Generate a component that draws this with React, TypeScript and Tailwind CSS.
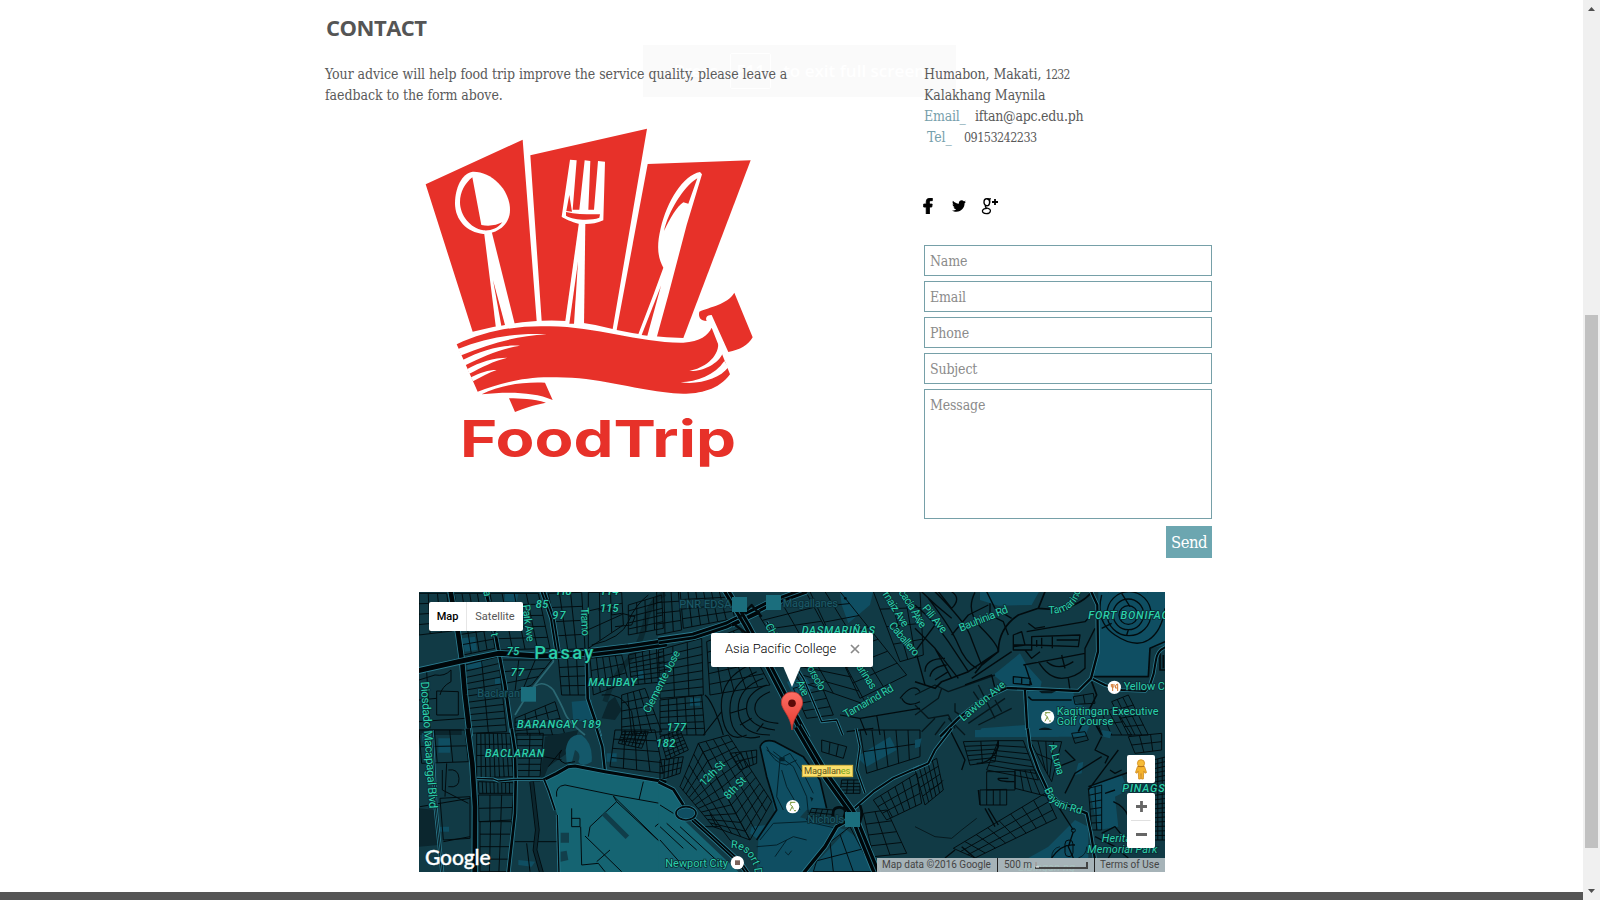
import React from "react";
import { FaFacebookF, FaTwitter } from "react-icons/fa";

const SERIF = "font-['DejaVu_Serif_Condensed','DejaVu_Serif',serif] [font-stretch:condensed]";
const RED = "#e73129";

/* ---------- Logo ---------- */
function Logo() {
  return (
    <svg width="360" height="365" viewBox="0 0 1080 1095" className="block" aria-label="FoodTrip">
      <g fill={RED}>
        <path d="M47 208 338 74 380 618Q280 625 188 650Z" />
        <path d="M361 121 711 41 608 642Q500 612 395 617Z" />
        <path d="M713 147 1022 136 820 669Q720 667 620 645Z" />
      </g>
      <g fill="#fff">
        <path d="M188 170C240 168 300 220 300 285C300 330 260 357 220 357C170 352 135 315 135 265C135 220 155 175 188 170Z" />
        <path d="M222 350 245 350 315 630 258 640Z" />
        <path d="M480 134 500 136 488 284 508 284 524 136 541 138 535 284 552 284 564 138 585 140 580 316C555 328 530 328 505 326C485 320 465 312 455 305Z" />
        <path d="M507 322 526 322 522 632 464 632Z" />
        <path d="M870 171C820 180 770 260 752 340C738 400 745 430 760 458L730 540 682 665 738 675 775 540 830 330 876 178Z" />
      </g>
      <g fill={RED}>
        <path d="M187 187 214 330C240 335 260 330 277 322C262 342 240 348 220 346C180 340 150 300 150 262C150 230 165 205 187 187Z" />
        <path d="M249 495 285 630 274 632Z" />
        <path d="M478 240 486 290 469 288Z" />
        <path d="M468 291C500 299 540 298 570 298L568 308C540 318 490 315 468 302Z" />
        <path d="M504 440 492 626 478 626Z" />
        <path d="M862 190 835 266 820 262C800 275 780 310 762 348C775 290 820 215 862 190Z" />
        <path d="M753 512 712 662 695 660Z" />
      </g>
      <g transform="translate(0 495)">
        <path fill={RED} d="M140 193C230 150 330 135 420 139C560 140 690 190 820 188C870 185 895 165 905 143L960 283C920 340 840 345 790 340C650 325 560 290 430 292C330 290 260 315 203 335Z" />
        <g fill="#fff">
          <path d="M144 207C230 172 320 158 410 163C320 168 240 190 154 226Z" />
          <path d="M158 240C215 210 280 193 330 197C280 204 215 230 166 256Z" />
          <path d="M172 267C210 246 250 233 292 233C250 243 215 262 178 281Z" />
          <path d="M183 292C210 278 235 270 260 270C235 278 215 290 189 304Z" />
          <path d="M925 190C925 235 880 265 838 273C880 275 925 250 937 222L935 205Z" />
          <path d="M943 243C915 285 860 305 812 307C870 315 930 295 955 262Z" />
        </g>
        <g fill={RED}>
          <path d="M973 38C950 75 900 80 868 95C864 112 872 122 890 123C885 113 892 104 905 105L955 216C990 210 1015 195 1028 172Z" />
          <path d="M215 343C270 315 340 305 405 308L428 360C370 335 290 335 215 343Z" />
          <path d="M297 355C330 355 370 357 408 368C370 375 340 385 315 396Z" />
        </g>
        <text x="150" y="530" fontFamily="Inter, sans-serif" fontWeight="700" fontSize="151" fill={RED} textLength="828" lengthAdjust="spacingAndGlyphs">FoodTrip</text>
      </g>
    </svg>
  );
}

/* ---------- Map drawing ---------- */
type Quad = [number, number, number, number, number, number, number, number];

/* Street grid spanned between four corners (clockwise from the first). */
function mesh([ax, ay, bx, by, cx, cy, dx, dy]: Quad, nx: number, ny: number) {
  let d = "";
  for (let i = 0; i <= nx; i++) {
    const t = i / nx;
    d += `M${ax + (bx - ax) * t} ${ay + (by - ay) * t}L${dx + (cx - dx) * t} ${dy + (cy - dy) * t}`;
  }
  for (let j = 0; j <= ny; j++) {
    const t = j / ny;
    d += `M${ax + (dx - ax) * t} ${ay + (dy - ay) * t}L${bx + (cx - bx) * t} ${by + (cy - by) * t}`;
  }
  return d;
}

function Sector({ x, y, children }: { x: number; y: number; children: React.ReactNode }) {
  return <g transform={`translate(${x} ${y}) scale(0.33333)`}>{children}</g>;
}

function Mesh({ q, nx, ny }: { q: Quad; nx: number; ny: number }) {
  return <path d={mesh(q, nx, ny)} stroke="#020b0e" strokeWidth="2.9" fill="none" />;
}

function Street({ d, w = 3 }: { d: string; w?: number }) {
  return <path d={d} stroke="#020b0e" strokeWidth={w} fill="none" strokeLinejoin="round" />;
}

function Road({ d, w = 8, twin = false }: { d: string; w?: number; twin?: boolean }) {
  return (
    <g fill="none" strokeLinejoin="round">
      <path d={d} stroke="#2b7c90" strokeWidth={w + 5} />
      <path d={d} stroke="#00070a" strokeWidth={w} />
      {twin && <path d={d} stroke="#2b7c90" strokeWidth="2.5" />}
    </g>
  );
}

interface LabelProps { x: number; y: number; t: string; len: number; s?: number; r?: number; b?: boolean; i?: boolean; c?: string }
function Label({ x, y, t, len, s = 33, r = 0, b = false, i = false, c = "#2bd0ab" }: LabelProps) {
  return (
    <text
      transform={`translate(${x} ${y}) rotate(${r})`}
      fontFamily="Roboto, sans-serif"
      fontSize={s}
      fontWeight={b ? 500 : 400}
      fontStyle={i ? "italic" : "normal"}
      textLength={len}
      fill={c}
      stroke="#0b2c35"
      strokeWidth={5}
      paintOrder="stroke"
    >
      {t}
    </text>
  );
}

/* Street name that follows a bend. */
function BentLabel({ id, d, t }: { id: string; d: string; t: string }) {
  return (
    <>
      <path id={id} d={d} fill="none" />
      <text fontFamily="Roboto, sans-serif" fontSize="32" fill="#2bd0ab" stroke="#0b2c35" strokeWidth={5} paintOrder="stroke">
        <textPath href={`#${id}`}>{t}</textPath>
      </text>
    </>
  );
}

function GolfPin({ x, y }: { x: number; y: number }) {
  return (
    <g transform={`translate(${x} ${y})`} fill="none" strokeWidth="3">
      <circle r="20" fill="#fff" />
      <path d="M-8-13H8M-3-13-8-7-1-1-8 13M-1-1 2 8" stroke="#7c9a3d" />
      <path d="M4 12H10" stroke="#7c9a3d" />
    </g>
  );
}

const PARK = "#0f4e62";
const AIR = "#156472";
const DARK = "#0b262e";
const FADED = "#1c5b69";

function MapArt() {
  return (
    <svg width="746" height="280" viewBox="0 0 746 280" className="block">
      <rect width="746" height="280" fill="#113a45" />

      {/* north west */}
      <Sector x={-4} y={-7}>
        <path fill={PARK} d="M140 160 180 155 186 195 150 200ZM155 235 205 228 200 250 158 252ZM470 350 530 345 530 405 475 410ZM270 25 310 28 305 50 268 48ZM670 255 690 255 685 280 668 280ZM240 280H262V298H240Z" />
        <path fill={DARK} d="M560 400 580 350 600 335 620 375 600 405ZM12 432H140V450H12Z" />
        <path d="M750 25Q700 50 690 120Q670 200 620 250Q590 290 570 350" stroke="#0c2b33" strokeWidth="16" fill="none" />
        <Mesh q={[12, 25, 95, 25, 112, 138, 12, 150]} nx={3} ny={4} />
        <Mesh q={[118, 25, 210, 25, 240, 190, 145, 210]} nx={4} ny={6} />
        <Mesh q={[225, 25, 370, 25, 405, 190, 255, 195]} nx={4} ny={5} />
        <Mesh q={[400, 25, 500, 22, 510, 190, 432, 195]} nx={3} ny={4} />
        <Mesh q={[520, 22, 620, 22, 625, 120, 520, 190]} nx={3} ny={3} />
        <Mesh q={[150, 240, 250, 215, 275, 440, 165, 445]} nx={2} ny={11} />
        <Mesh q={[262, 225, 410, 225, 350, 300, 275, 330]} nx={3} ny={3} />
        <Mesh q={[430, 220, 512, 215, 515, 330, 440, 330]} nx={3} ny={4} />
        <Mesh q={[525, 220, 620, 210, 640, 290, 535, 330]} nx={5} ny={3} />
        <Mesh q={[300, 400, 420, 350, 450, 450, 300, 450]} nx={4} ny={4} />
        <Mesh q={[640, 60, 740, 30, 745, 130, 640, 150]} nx={4} ny={5} />
        <Mesh q={[640, 210, 745, 185, 750, 290, 650, 300]} nx={5} ny={7} />
        <Mesh q={[620, 330, 690, 310, 740, 440, 620, 450]} nx={4} ny={5} />
        <Street d="M12 285 60 270Q90 275 108 255V290Q80 305 75 330M65 318 130 320V390H65ZM12 345 65 340M12 410 150 400M35 260 45 430M550 75 590 70V90L620 85 660 95 650 120 600 125M530 180Q620 160 640 110T700 30M560 330Q620 320 650 380L660 450" />
        <path d="M300 390 340 325 415 230V205M345 320Q378 275 415 315Q440 360 450 385T510 450" stroke="#2b6873" strokeWidth="5" fill="none" />
        <Road d="M382 15 412 100 428 200" w={14} twin />
        <Road d="M212 15 238 130 252 205 270 300 292 455" w={9} />
        <Road d="M106 15 130 150 142 235 150 330 165 455" w={14} />
        <Road d="M530 203 640 190 755 173" w={24} twin />
        <Road d="M5 258 130 230 250 205 360 212 430 212 530 203" w={15} />
        <Road d="M515 205 518 340 545 420 555 455" w={8} />
      </Sector>

      {/* south west */}
      <Sector x={-4} y={138}>
        <path fill={AIR} d="M392 150 460 112 570 127 755 158V430H432L427 255Z" />
        <path fill={DARK} d="M12 235 62 240 70 345 12 350ZM345 155 375 155 390 20 490 0 470 60 400 110 385 148Z" />
        <path fill={PARK} d="M70 25H105V68H70ZM20 10 45 5 50 30 22 35ZM310 390 360 395 350 410 310 405ZM75 290H102V305H75ZM575 70H605V95H575Z" />
        <path fill="#14586a" d="M452 60Q460 10 500 15Q535 40 530 95Q500 115 490 95Q500 70 480 60L470 100 455 100Z" />
        <Mesh q={[185, 10, 285, 10, 295, 140, 185, 143]} nx={8} ny={4} />
        <Mesh q={[190, 155, 295, 158, 295, 190, 192, 190]} nx={9} ny={1} />
        <Mesh q={[190, 195, 295, 195, 290, 270, 192, 275]} nx={3} ny={2} />
        <Mesh q={[195, 275, 290, 275, 280, 425, 195, 425]} nx={3} ny={4} />
        <Mesh q={[305, 10, 385, 10, 375, 140, 308, 140]} nx={2} ny={7} />
        <Mesh q={[12, 0, 150, 0, 160, 95, 20, 100]} nx={3} ny={2} />
        <Mesh q={[75, 205, 165, 200, 165, 325, 85, 330]} nx={1} ny={1} />
        <Mesh q={[600, 0, 720, 0, 745, 130, 585, 110]} nx={4} ny={4} />
        <Mesh q={[622, 5, 700, 5, 680, 55, 610, 40]} nx={7} ny={4} />
        <Street d="M100 120Q130 115 132 145T100 170M82 120V180L160 220M15 230 165 205M85 335 165 320M300 335 430 335M400 110 440 60Q420 90 450 100L480 95M385 80 440 90M95 100 90 200M335 340 345 425" />
        <Street w={14} d="M350 155 367 300 360 360 380 430" />
        <path d="M350 155 367 300 360 360 380 430" stroke={DARK} strokeWidth="9" fill="none" />
        <Road d="M50 0 62 235 82 430" w={7} twin />
        <Road d="M158 -5 172 100 180 230 179 430" w={14} />
        <Road d="M290 -5 300 60 302 150 300 250 280 430" w={8} />
        <Road d="M185 145 235 147 250 153 300 148 385 148" w={4} />
        <Road d="M545 -5 562 50 570 125" w={7} />
        <Road d="M385 150 425 130 460 110 480 108 570 125 755 156" w={9} />
        <Road d="M388 150 402 185 420 240" w={5} />
        <Road d="M427 255 432 430" w={4} />
        <Street d="M425 200Q420 168 450 165L595 195 745 222M685 155 672 210M470 235V290H495V265H470M497 290 500 405 550 400 570 425M510 318 620 425M595 198 605 215 525 290 520 320M605 215 750 350M595 198 755 355M720 290 755 260M545 395 585 360" />
        <path d="M565 250 637 322" stroke="#103d49" strokeWidth="15" />
        <path fill="#123f4b" d="M437 308H462V338H437ZM437 365 455 362 460 390 437 395Z" />
      </Sector>

      {/* north centre */}
      <Sector x={241} y={-7}>
        <path fill={PARK} d="M540 18H640L630 60 565 115 545 60ZM90 340H120V362H90ZM380 290 440 280 460 310 400 330Z" />
        <Mesh q={[60, 15, 200, 15, 225, 100, 70, 130]} nx={6} ny={4} />
        <Mesh q={[-10, 20, 55, 20, 65, 135, -10, 150]} nx={3} ny={4} />
        <Mesh q={[-5, 195, 125, 160, 130, 330, 0, 340]} nx={3} ny={7} />
        <Mesh q={[140, 170, 240, 130, 330, 300, 150, 330]} nx={5} ny={5} />
        <Mesh q={[0, 345, 125, 330, 135, 450, 0, 450]} nx={5} ny={6} />
        <Mesh q={[290, 80, 440, 25, 620, 360, 420, 290]} nx={2} ny={8} />
        <Mesh q={[450, 20, 540, 20, 740, 270, 600, 340]} nx={2} ny={7} />
        <Mesh q={[640, 20, 780, 20, 790, 210, 720, 230]} nx={3} ny={4} />
        <Mesh q={[400, 310, 480, 290, 520, 390, 440, 400]} nx={2} ny={4} />
        <g stroke="#020b0e" strokeWidth="3.4" fill="none">
          <path d="M310 280Q230 310 235 380T330 450M320 300Q255 325 260 375T345 435M330 320Q280 340 285 375T355 415M290 260Q205 295 210 385T300 455M270 240Q175 280 185 380T260 450M135 330Q160 350 190 450M185 380 130 450M210 385 260 370M240 420 275 400M290 440 310 415" />
          <path d="M540 390 600 400 620 450M600 400 780 370M650 390 660 450M720 340Q760 290 780 320M725 340Q740 370 780 350M560 440 640 430" />
        </g>
        <Road d="M320 110 430 280 485 410 530 405 548 450" w={4} />
        <Road d="M-5 168 100 153 200 120 330 55 440 15" w={20} twin />
        <Road d="M215 120 300 80" w={12} />
        <Road d="M195 10 260 120 330 250 400 385 440 460" w={21} twin />
        <Street d="M235 100 275 60 305 95M225 120 280 160" w={7} />
        <circle cx="556" cy="40" r="4" fill="#020b0e" />
      </Sector>

      {/* south centre */}
      <Sector x={241} y={138}>
        <path fill={AIR} d="M-5 160 40 178 62 225 50 250 240 430H-5Z" />
        <path fill={PARK} d="M298 50Q310 25 345 35L430 80 480 150 500 235 440 240 420 262 560 300 490 350 430 430H290L295 330 270 310 275 290 320 285 345 250 320 140ZM590 80 690 20 710 60 620 110ZM560 300 600 330 640 430H440Z" />
        <path fill="#176273" d="M0 290 90 425H0Z" opacity=".6" />
        <Mesh q={[115, 40, 205, 15, 335, 215, 270, 330]} nx={4} ny={11} />
        <Mesh q={[115, 40, 60, 170, 160, 290, 270, 330]} nx={4} ny={11} />
        <Mesh q={[0, 20, 60, 0, 85, 60, 20, 90]} nx={5} ny={6} />
        <Mesh q={[0, 90, 70, 80, 60, 130, 0, 150]} nx={5} ny={3} />
        <Mesh q={[210, 70, 290, 60, 290, 100, 240, 120]} nx={5} ny={2} />
        <Mesh q={[485, 30, 560, 50, 550, 85, 485, 65]} nx={3} ny={1} />
        <Mesh q={[545, 150, 600, 150, 600, 190, 540, 190]} nx={3} ny={4} />
        <Mesh q={[600, 0, 780, 0, 780, 80, 620, 130]} nx={5} ny={2} />
        <Mesh q={[640, 210, 770, 130, 785, 220, 680, 270]} nx={6} ny={3} />
        <Mesh q={[610, 250, 680, 240, 740, 370, 640, 380]} nx={2} ny={4} />
        <Mesh q={[480, 360, 570, 290, 640, 425, 460, 425]} nx={3} ny={2} />
        <Mesh q={[455, 235, 520, 240, 510, 280, 440, 270]} nx={4} ny={3} />
        <Street w={5} d="M300 50Q310 25 345 35L430 80 480 150 500 235M300 50 320 140 350 240 290 330" />
        <g stroke="#03212b" strokeWidth="3" fill="none">
          <path d="M320 60 360 90 350 200 370 240M340 65 400 110 440 200 445 250M370 80 390 70 430 130 460 190M320 50Q340 100 380 105L410 90M365 120 380 170 420 240M300 330 340 280 440 275 530 295M290 350 350 345 400 320 440 330M345 380 380 330M375 365 385 375 395 362" />
        </g>
        <path fill="#03212b" d="M358 82H374V94H358ZM450 200 460 205 455 215Z" />
        <Street d="M0 290 70 355M20 280 110 360M60 290 180 400M0 330 80 420M40 250 0 225M130 290 180 290 210 330 300 400M150 250 170 290" />
        <Road d="M780 110 700 145 640 185 580 238" w={6} />
        <Road d="M588 -5 600 50 590 120 615 190" w={4} />
        <Road d="M-5 156 40 178 70 225" w={8} />
        <Road d="M98 268 150 315 240 398 262 430" w={13} twin />
        <ellipse cx="78" cy="250" rx="30" ry="20" fill={PARK} stroke="#2b7c90" strokeWidth="9" />
        <ellipse cx="78" cy="250" rx="30" ry="20" fill="none" stroke="#020b0e" strokeWidth="5" />
        <Road d="M580 262 530 290 495 350 430 430" w={10} />
        <Road d="M412 -10 500 140 575 245 650 430" w={23} twin />
        <Street d="M520 262Q515 230 540 232T550 265M600 225Q615 260 590 290" w={8} />
      </Sector>

      {/* north east */}
      <Sector x={496} y={-7}>
        <path fill={PARK} d="M195 15H375L350 60 250 62 195 45ZM550 15H755V180L705 190 700 275 530 275 548 200ZM235 270 315 205 335 240 380 290 375 315 280 305ZM340 318 475 322 480 350 540 380 510 455H180L200 430 330 420Z" />
        <g stroke="#020b0e" strokeWidth="4" fill="none">
          <circle cx="640" cy="90" r="28" />
          <circle cx="640" cy="88" r="46" />
          <circle cx="642" cy="86" r="66" />
          <path d="M560 30Q540 110 600 150T700 165T750 70M580 20Q620 0 700 20M620 25 645 65M635 150 640 135M560 130 590 115" />
        </g>
        <Street d="M20 20Q60 60 110 100M70 20 110 70Q140 40 110 20M0 60Q60 110 100 170T160 260M40 40Q110 130 130 180T185 250M0 200 60 120M0 130 60 190 130 280M60 20Q150 110 165 150T200 240M180 22Q150 80 200 130T250 200M110 150 160 90 220 60M215 20 240 70 290 100M225 55V90L265 110 280 150M30 260Q30 220 90 220M45 275Q50 245 95 240M60 285 100 260M0 190 30 300M60 190 110 280" w={4} />
        <Street w={5} d="M390 20 370 70 310 90Q250 130 250 200L160 260 80 290 60 310 0 290M250 200 200 240 180 265M370 70 440 75Q510 50 530 20" />
        <Street w={4} d="M340 115 360 130 390 125M335 140 510 110 530 90M295 150 320 140 330 180 295 185ZM295 180 350 180V195H295ZM350 155 495 150 490 185 350 180ZM365 165V185M380 158V190M412 155V190M425 165H490M330 195 350 220 375 200M325 240 380 230 510 205M370 230Q400 280 440 280T510 250V190L540 130M395 230Q430 260 475 230M460 280 465 315M330 240 350 300M295 275 345 280V300L295 295ZM320 278V298M150 300 230 270 240 310M170 280 290 200M440 210 450 250" />
        <g opacity=".75">
          <Street d="M0 330 60 300 100 320 240 270M0 390 70 340 80 310M120 355V380L150 400M190 300 210 340M175 320 195 350M160 415 270 340M190 420 290 370M215 350 240 400M240 345 260 380M0 360 40 400 100 390 120 430M20 440 60 400M60 450 90 410M100 400 150 450" w={4} />
        </g>
        <Mesh q={[475, 335, 535, 325, 540, 355, 480, 358]} nx={2} ny={1} />
        <Mesh q={[590, 350, 640, 330, 700, 450, 640, 450]} nx={3} ny={4} />
        <Mesh q={[540, 390, 600, 370, 650, 450, 560, 450]} nx={3} ny={2} />
        <Street w={5} d="M530 275 700 275 705 190 750 170M735 200V255H755M745 210V250M530 290 545 330 520 380 560 450M350 345H470M340 335 350 345M480 380 510 400 490 440" />
        <Road d="M755 185Q725 195 722 230T705 300L690 318 620 315 570 300 530 280" w={6} />
        <Road d="M525 12 547 60 549 200 528 280 490 318 380 313 270 309" w={7} />
        <Road d="M275 309 200 345 130 400 75 455" w={7} />
        <Road d="M330 315 338 455" w={7} />
        <path fill="#020b0e" opacity=".8" d="M372 432Q390 422 412 434L408 442H398V436H386V443H374ZM372 318H424L410 325H380Z" />
      </Sector>

      {/* south east */}
      <Sector x={496} y={138}>
        <path fill={PARK} d="M180 0H450L430 20 180 22ZM490 100 505 95 500 130 480 135ZM560 0 590 5 585 25 565 20ZM520 170 620 135 640 180 600 200 610 290 550 300ZM400 350 480 270 520 290 520 384H340ZM0 30 20 25 15 50 0 55Z" />
        <Mesh q={[145, 35, 250, 32, 240, 95, 165, 105]} nx={2} ny={5} />
        <Mesh q={[250, 32, 325, 32, 370, 150, 215, 120]} nx={1} ny={6} />
        <Mesh q={[345, 32, 440, 35, 410, 155, 385, 110]} nx={4} ny={2} />
        <Mesh q={[215, 125, 300, 125, 300, 180, 215, 180]} nx={1} ny={1} />
        <Mesh q={[195, 180, 275, 178, 275, 225, 195, 225]} nx={4} ny={1} />
        <Mesh q={[0, 120, 65, 85, 85, 180, 30, 225]} nx={5} ny={4} />
        <Mesh q={[115, 355, 390, 190, 425, 265, 180, 384]} nx={8} ny={3} />
        <Mesh q={[300, 120, 360, 120, 400, 200, 300, 175]} nx={4} ny={1} />
        <Mesh q={[520, 175, 560, 165, 560, 300, 530, 300]} nx={2} ny={6} />
        <Mesh q={[640, 20, 740, 10, 740, 60, 660, 70]} nx={3} ny={2} />
        <Mesh q={[715, 90, 755, 80, 755, 330, 715, 330]} nx={3} ny={18} />
        <Mesh q={[470, 10, 510, 5, 520, 30, 480, 40]} nx={1} ny={2} />
        <Street d="M105 0 130 50 150 90 140 120M185 100Q230 100 250 50V30M280 145H250Q245 155 298 155M195 225 190 180M210 235 240 290M220 235 250 285M180 384 140 350M90 384 120 360M450 60 480 90 430 110M560 20 540 60 580 80 570 100M560 80 480 130 450 190M610 60 520 180M585 120 600 130 620 120M430 230 475 300M475 305 460 350 475 384M410 384Q440 340 480 345M520 170 660 120" w={4} />
        <Street d="M595 215Q630 230 640 260M560 310 600 290 640 340M570 190 600 180M610 360 640 384M540 320 600 350M580 384 600 350" w={4} />
        <g fill="none" stroke="#020b0e" strokeWidth="3">
          <circle cx="475" cy="301" r="6" />
          <rect x="450" y="330" width="24" height="50" rx="12" />
          <path d="M410 384Q410 355 435 350M490 384Q515 375 515 350M0 290 60 320 110 325 140 300 185 265M40 180Q70 170 85 150" opacity=".7" />
        </g>
        <Road d="M-5 120 40 100 60 60 110 -5" w={6} />
        <Road d="M338 -5 345 50 370 120 400 185 430 215 515 250 528 310 540 390" w={7} />
      </Sector>

      {/* place names */}
      <Sector x={-4} y={-7}>
        <Label x={187} y={336} t="Baclaran" len={128} c={FADED} />
        <rect x="318" y="306" width="45" height="44" fill="#1b6e7d" />
        <Label x={205} y={18} r={80} t="an St" len={140} />
        <Label x={322} y={60} r={83} t="Park Ave" len={112} />
        <Label x={497} y={68} r={87} t="Tramo" len={85} />
        <Label x={362} y={70} t="85" len={38} i b />
        <Label x={412} y={103} t="97" len={40} i b />
        <Label x={420} y={30} t="118" len={50} i b />
        <Label x={555} y={31} t="114" len={56} i b />
        <Label x={555} y={80} t="115" len={56} i b />
        <Label x={275} y={211} t="75" len={38} i b />
        <Label x={287} y={272} t="77" len={40} i b />
        <Label x={358} y={222} t="Pasay" len={177} s={55} b />
        <Label x={520} y={302} t="MALIBAY" len={145} i b />
        <Label x={306} y={430} t="BARANGAY 189" len={252} i b />
        <Label x={703} y={386} r={-63} t="Clemente Jose" len={205} />
        <Label x={17} y={290} r={86} t="Diosdado Macapagal Blvd" len={382} s={35} />
      </Sector>
      <Sector x={-4} y={138}>
        <Label x={210} y={80} t="BACLARAN" len={178} i b />
      </Sector>
      <Sector x={241} y={-7}>
        <Label x={58} y={70} t="PNR EDSA" len={156} c={FADED} />
        <Label x={368} y={65} t="Magallanes" len={166} c={FADED} />
        <rect x="216" y="36" width="45" height="45" fill="#1b6e7d" />
        <rect x="318" y="30" width="45" height="45" fill="#1b6e7d" />
        <Label x={315} y={122} r={63} t="Chino" len={70} />
        <Label x={425} y={147} t="DASMARIÑAS" len={220} i b />
        <Label x={408} y={292} r={65} t="Ave" len={48} />
        <Label x={440} y={250} r={60} t="orsolo" len={80} />
        <Label x={565} y={210} r={57} t="smarinas" len={125} />
        <Label x={558} y={400} r={-30} t="Tamarind Rd" len={168} />
        <Label x={667} y={28} r={58} t="rnaiz Ave" len={118} />
        <Label x={715} y={22} r={57} t="cacia Ave" len={118} />
        <Label x={685} y={122} r={50} t="Caballero" len={122} />
        <Label x={20} y={437} t="177" len={58} i b />
      </Sector>
      <Sector x={241} y={138}>
        <Label x={-12} y={50} t="182" len={58} i b />
        <Label x={132} y={170} r={-45} t="12th St" len={92} />
        <Label x={205} y={210} r={-46} t="8th St" len={80} />
        <Label x={442} y={280} t="Nichols" len={110} c={FADED} />
        <rect x="555" y="246" width="45" height="45" fill="#1b6e7d" />
        <BentLabel id="resort" d="M212 354Q262 352 282 412L286 440" t="Resort Dr" />
        <Label x={16} y={410} t="Newport City" len={188} />
        <circle cx="232" cy="398" r="20" fill="#fff" />
        <rect x="225" y="391" width="15" height="14" fill="#7b625a" />
        <GolfPin x={398} y={230} />
        <rect x="427" y="106" width="151" height="34" fill="#fbe06c" stroke="#d9b842" strokeWidth="3" />
        <text x="432" y="132" fontFamily="Roboto, sans-serif" fontSize="28" fill="#5b5421" textLength="139">
          Magallan<tspan fill="#79a51c">es</tspan>
        </text>
      </Sector>
      <Sector x={496} y={-7}>
        <Label x={20} y={70} r={51} t="Pili Ave" len={98} />
        <Label x={-10} y={95} r={52} t="Ave" len={46} />
        <Label x={137} y={140} r={-22} t="Bauhinia Rd" len={156} />
        <BentLabel id="tamarind" d="M400 86Q470 88 494 30L498 0" t="Tamarind" />
        <Label x={520} y={101} t="FORT BONIFACIO" len={276} i b />
        <Label x={145} y={410} r={-40} t="Lawton Ave" len={168} />
        <Label x={626} y={315} t="Yellow Cab" len={160} />
        <Label x={425} y={389} t="Kagitingan Executive" len={306} />
        <Label x={425} y={421} t="Golf Course" len={170} />
        <GolfPin x={398} y={396} />
        <circle cx="598" cy="307" r="20" fill="#fff" />
        <path d="M589 297V304Q589 307 593 307V318M593 297V307M597 297V304Q597 307 593 307M608 318V297Q601 297 601 309H608" stroke="#d3762c" strokeWidth="3" fill="none" />
      </Sector>
      <Sector x={496} y={138}>
        <Label x={401} y={44} r={74} t="A. Luna" len={96} />
        <BentLabel id="bayani" d="M388 178Q405 222 440 236L530 262" t="Bayani Rd" />
        <Label x={622} y={185} t="PINAGSAMA" len={205} i b />
        <Label x={560} y={336} t="Heritage" len={125} i />
        <Label x={517} y={369} t="Memorial Park" len={210} i />
        <Label x={310} y={424} t="Libingan ng" len={170} i />
      </Sector>
    </svg>
  );
}

function MapPanel() {
  return (
    <div className="relative ml-[419px] h-[280px] w-[746px] overflow-hidden font-[Roboto,sans-serif]">
      <MapArt />

      <div className="absolute left-[10px] top-[10px] flex h-[29px] w-[94px] items-center rounded-[2px] bg-white text-[11px] leading-none">
        <span className="flex h-full w-[38px] items-center justify-center border-r border-[#e6e6e6] font-medium text-black">Map</span>
        <span className="flex-1 text-center text-[#565656]">Satellite</span>
      </div>

      <div className="absolute left-[292px] top-[41px] flex h-[34px] w-[162px] items-center rounded-[2px] bg-white pl-[14px] shadow-md">
        <span className="-mt-[2px] whitespace-nowrap text-[13px] font-light tracking-[-0.02px] text-black">Asia Pacific College</span>
        <svg width="10" height="10" viewBox="0 0 10 10" className="absolute left-[139px] top-[11px]">
          <path d="M1 1 9 9M9 1 1 9" stroke="#8a8a8a" strokeWidth="1.7" />
        </svg>
      </div>
      <svg width="24" height="64" viewBox="0 0 24 64" className="absolute left-[361px] top-[74px]">
        <path d="M3 0H21L12 21Z" fill="#fff" />
        <defs>
          <linearGradient id="pin" x1="0" y1="0" x2="0" y2="1">
            <stop offset="0" stopColor="#fb6e64" />
            <stop offset="1" stopColor="#e5392f" />
          </linearGradient>
        </defs>
        <path d="M12 26C5.500 26 1.400 31 1.400 36.500C1.400 44 10.500 49 12 64C13.500 49 22.600 44 22.600 36.500C22.600 31 18.500 26 12 26Z" fill="url(#pin)" stroke="#c5372f" strokeWidth=".8" />
        <circle cx="12" cy="37.300" r="3.800" fill="#5c0a08" />
      </svg>

      <div className="absolute left-[6px] top-[252px] text-[21px] font-medium leading-[26px] tracking-[-0.1px] text-white [-webkit-text-stroke:0.35px_white] font-[Lato,sans-serif]">Google</div>

      <div className="absolute left-[708px] top-[163px] flex h-[28px] w-[28px] items-center justify-center rounded-[2px] bg-white">
        <svg width="12" height="21" viewBox="0 0 12 21">
          <path d="M2.500 7.500H9.500L11.500 13.500 10 14.200 8.800 12 8.300 20H6.500L6 14.500 5.500 20H3.700L3.200 12 2 14.200.5 13.500Z" fill="#f4b32d" stroke="#cf8a1d" strokeWidth=".8" />
          <circle cx="6" cy="4.300" r="3.600" fill="#f6bb36" stroke="#d18c1c" strokeWidth=".8" />
          <path d="M3 7.500H9" stroke="#b5721a" />
        </svg>
      </div>

      <div className="absolute left-[708px] top-[201px] flex h-[55px] w-[28px] flex-col items-center rounded-[2px] bg-white">
        <svg width="28" height="55" viewBox="0 0 28 55">
          <path d="M9 13.500H20M14.500 8V19M9 41.500H20" stroke="#666" strokeWidth="2.800" />
          <path d="M4 27.500H23.500" stroke="#e0e0e0" />
        </svg>
      </div>

      <div className="absolute bottom-0 left-[458px] flex h-[14px] w-[288px] items-center whitespace-nowrap bg-[#b7c1c4]/90 text-[10px] leading-[14px] text-[#444]">
        <span className="w-[120px] pl-[5px]">Map data ©2016 Google</span>
        <span className="flex h-full w-[97px] items-center gap-[3px] border-l border-[#222] pl-[6px]">
          500 m
          <svg width="53" height="7" viewBox="0 0 53 7" className="shrink-0">
            <path d="M1 0V6H52V0" fill="none" stroke="#444" strokeWidth="2" />
            <path d="M1 0V5H4" fill="none" stroke="#fff" strokeWidth="1" />
          </svg>
        </span>
        <span className="flex-1 border-l border-[#222] pl-[5px]">Terms of Use</span>
      </div>
    </div>
  );
}

/* ---------- Page ---------- */
const FIELDS = ["Name", "Email", "Phone", "Subject"];
const FIELD = "block w-full rounded-none border border-[#76a0a8] bg-white px-[5px] text-[14px] tracking-[-0.15px] text-[#555] placeholder:text-[#8b8b8b] outline-none";

export default function App() {
  return (
    <div className="relative flex h-[900px] w-[1600px] overflow-hidden bg-white">
      <div className="absolute left-[643px] top-[45px] flex h-[52px] w-[313px] items-center justify-center gap-[12px] bg-[#fafafa] font-['Open_Sans',sans-serif] text-[17px] font-semibold text-white">
        <span>Press</span>
        <span className="flex h-[36px] w-[41px] items-center justify-center rounded-[2px] border border-white">F11</span>
        <span>to exit full screen</span>
      </div>

      <main className="relative flex w-[1583px] flex-col">
        <div className="grid h-[592px] grid-cols-[598px_288px] pl-[326px]">
          <section>
            <h1 className="h-[64px] pt-[13px] font-['Open_Sans',sans-serif] text-[22px] font-bold leading-[28px] tracking-[-0.5px] text-[#555]">CONTACT</h1>
            <p className={`${SERIF} -ml-px h-[51px] whitespace-nowrap text-[14px] leading-[21px] tracking-[-0.05px] text-[#5a5a5a]`}>
              Your advice will help food trip improve the service quality, please leave a
              <br />
              faedback to the form above.
            </p>
            <div className="pl-[84px]">
              <Logo />
            </div>
          </section>

          <section className={`${SERIF} pt-[64px]`}>
            <address className="h-[134px] whitespace-pre text-[14px] not-italic leading-[21px] tracking-[-0.1px] text-[#5a5a5a]">
              <div className="h-[21px]">Humabon, Makati, <span className="text-[12px] leading-none tracking-[-0.8px]">1232</span></div>
              <div className="h-[21px]">Kalakhang Maynila</div>
              <div className="h-[21px] tracking-[-0.25px]"><span className="inline-block w-[51px] text-[#76a0ac]">Email_</span>iftan@apc.edu.ph</div>
              <div className="h-[21px]"><span className="inline-block w-[40px] pl-[3px] text-[#76a0ac]">Tel_</span><span className="text-[12.500px] leading-none tracking-[-0.55px]">09153242233</span></div>
            </address>
            <div className="flex h-[47px] items-start text-black">
              <FaFacebookF className="-ml-[4px] h-[16px] w-[16px] stroke-black [stroke-width:30]" />
              <FaTwitter className="ml-[16px] mt-[1px] h-[14px] w-[14px]" />
              <svg width="18" height="17" viewBox="0 0 18 17" className="ml-[15px]" fill="none" stroke="#000">
                <ellipse cx="5.800" cy="4.300" rx="2.800" ry="3.500" strokeWidth="1.400" />
                <path d="M6 .8H10M8 1.500Q9.200 2.500 8.600 4.500M5 7.800Q3.500 9 5.500 9.800Q9.600 10.800 9.400 12.800Q9 15.600 5.400 15.600Q1.400 15.400 1.400 12.800Q2 10.500 6 10.300" strokeWidth="1.300" />
                <path d="M11 4H17M14 1V7" strokeWidth="1.800" />
              </svg>
            </div>
            <form className="flex flex-col gap-[5px]">
              {FIELDS.map((name) => (
                <input key={name} placeholder={name} className={`${FIELD} h-[31px]`} />
              ))}
              <textarea placeholder="Message" className={`${FIELD} h-[130px] resize-none pt-[5px] leading-[21px]`} />
              <button type="button" className="mt-[2px] h-[32px] w-[46px] self-end bg-[#6ca6b0] pt-[2px] text-[16.500px] tracking-[-0.5px] text-white">Send</button>
            </form>
          </section>
        </div>
        <MapPanel />
        <footer className="mt-[20px] h-[8px] bg-[#555]" />
      </main>

      <aside className="flex h-full w-[17px] flex-col items-center bg-[#f0f0f0]">
        <svg width="17" height="17" viewBox="0 0 17 17">
          <path d="M5 11 8.500 7 12 11Z" fill="#505050" />
        </svg>
        <div className="mt-[298px] h-[533px] w-[13px] bg-[#c1c1c1]" />
        <svg width="17" height="17" viewBox="0 0 17 17" className="mt-auto">
          <path d="M5 6 8.500 10 12 6Z" fill="#505050" />
        </svg>
      </aside>
    </div>
  );
}
